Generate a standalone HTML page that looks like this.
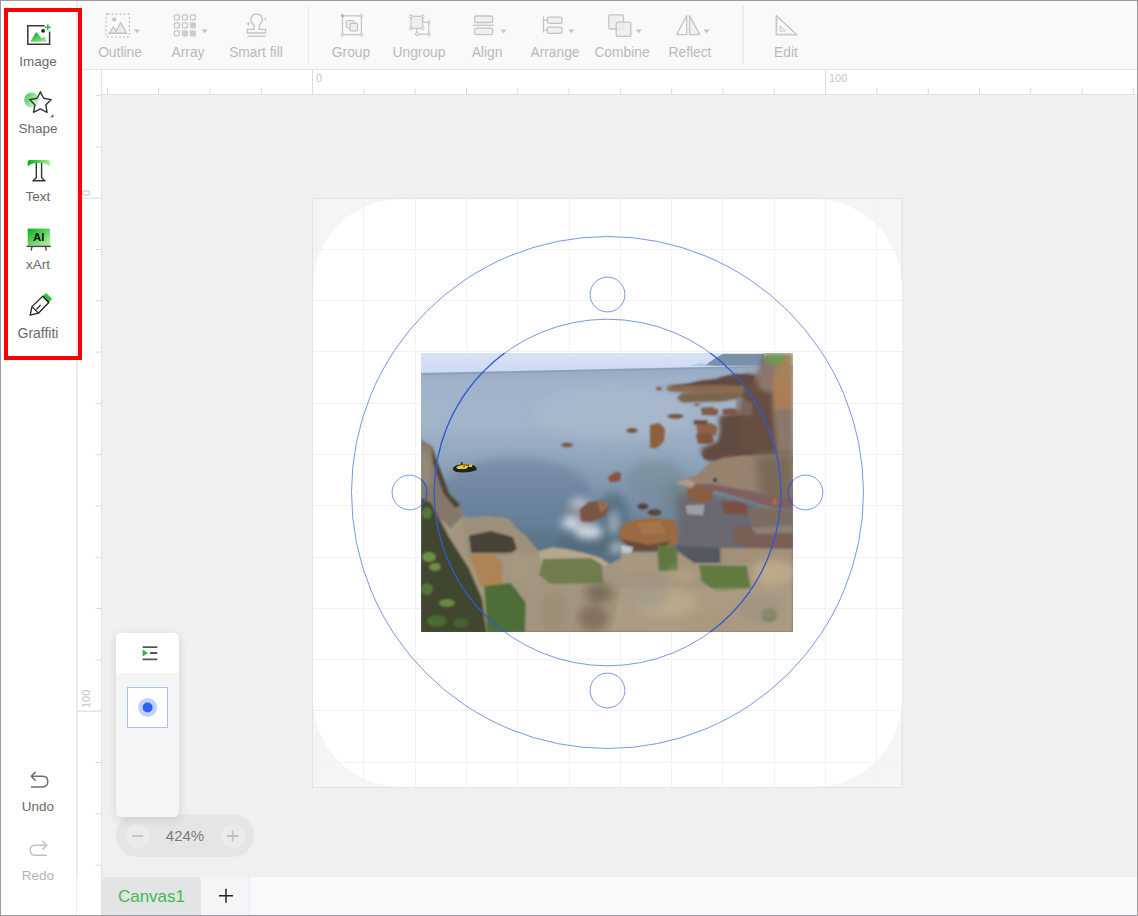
<!DOCTYPE html>
<html><head><meta charset="utf-8">
<style>
*{margin:0;padding:0;box-sizing:border-box}
html,body{width:1138px;height:916px;overflow:hidden;background:#fff;font-family:"Liberation Sans",sans-serif}
.a{position:absolute}
#frame{position:absolute;left:0;top:0;width:1138px;height:916px;border:1px solid #9c9c9c;pointer-events:none;z-index:50}
#side{left:1px;top:1px;width:76px;height:914px;background:#fff}
#tool{left:77px;top:1px;width:1060px;height:69px;background:#f9f9f9;border-bottom:1px solid #e4e4e4}
#canvas{left:102px;top:95px;width:1035px;height:782px;background:#f0f0f0}
.lbl{position:absolute;font-size:13.5px;color:#6a6a6a;text-align:center;width:76px;white-space:nowrap}
.tl{position:absolute;font-size:13.8px;color:#b9b9b9;text-align:center;width:90px;white-space:nowrap}
.sep{position:absolute;top:6px;width:1.5px;height:58px;background:#ececf0}
</style></head><body>
<div id="frame"></div>
<svg class="a" style="left:0;top:0;z-index:30" width="1138" height="916" viewBox="0 0 1138 916">
<defs>
<linearGradient id="gA" x1="0.2" y1="0" x2="1" y2="1"><stop offset="0" stop-color="#00ac18"/><stop offset="1" stop-color="#a8eea0"/></linearGradient>
<linearGradient id="gB" x1="0" y1="0" x2="1" y2="0.6"><stop offset="0" stop-color="#35c84a"/><stop offset="1" stop-color="#d6f5d2"/></linearGradient>
<linearGradient id="gT" x1="0" y1="0" x2="1" y2="0"><stop offset="0" stop-color="#00b012"/><stop offset="1" stop-color="#a8ee9c"/></linearGradient>
<linearGradient id="gX" x1="0" y1="0" x2="1" y2="1"><stop offset="0" stop-color="#00b414"/><stop offset="1" stop-color="#b8f2aa"/></linearGradient>
</defs>
<!-- Image icon -->
<path d="M44.5 25.8 H27.8 V44.2 H49.6 V31.5" fill="none" stroke="#383838" stroke-width="1.5"/>
<path d="M47.8 24.2 V30.2 M44.8 27.2 H50.8" stroke="#26c43c" stroke-width="1.5"/>
<circle cx="43.1" cy="30.8" r="1.9" fill="#222"/>
<path d="M30.3 41.7 L35.8 32.6 Q36.2 32 36.7 32.6 L41.8 38.6 L43.6 37.2 Q44.1 36.8 44.5 37.3 L47 41.7 Z" fill="url(#gA)"/>
<!-- Shape icon -->
<circle cx="31.6" cy="100" r="7.4" fill="url(#gB)"/>
<path d="M40.4 91.8 L43.6 98.3 L51.2 99.6 L45.8 104.9 L47.1 112.3 L40.4 108.9 L33.5 112.3 L35 104.9 L29.6 99.6 L37.2 98.3 Z" fill="none" stroke="#333" stroke-width="1.4" stroke-linejoin="round"/>
<path d="M53.4 114 L53.4 117.2 L50.2 117.2 Z" fill="#555"/>
<!-- Text icon -->
<path d="M27.7 166.6 V161.8 Q27.7 160 29.8 160 H47.8 Q49.9 160 49.9 161.8 V166.6 Q46.5 163 41.6 163 H36.3 Q31.2 163 27.7 166.6 Z" fill="url(#gT)"/>
<path d="M36.3 163 V177.8 L33 180.8 H44.9 L41.6 177.8 V163" fill="none" stroke="#333" stroke-width="1.4" stroke-linejoin="round"/>
<!-- xArt icon -->
<rect x="27.7" y="228.6" width="22.2" height="16.4" fill="url(#gX)"/>
<text x="38.8" y="241.3" font-size="11.5" font-weight="bold" text-anchor="middle" fill="#111" font-family="Liberation Sans">AI</text>
<path d="M26.6 246.3 H50.7" stroke="#444" stroke-width="1.6"/>
<path d="M32 247 L31.2 250 M45.6 247 L46.2 250" stroke="#444" stroke-width="1.3" stroke-linecap="round"/>
<!-- Graffiti icon -->
<path d="M42.6 296.3 L45.4 293.6 Q46 293 46.7 293.6 L51.6 298.2 Q52.2 298.9 51.6 299.6 L48.9 302.6 Z" fill="#2fc43f"/>
<path d="M42.8 296.1 L32 306.6 L30.1 315.1 L38.4 313.2 L48.8 302.5 Z" fill="none" stroke="#222" stroke-width="1.3" stroke-linejoin="round"/>
<path d="M43.2 297 L48.4 302" stroke="#222" stroke-width="1.2"/>
<path d="M32 306.6 L38.4 313.2 M36.3 309.6 L40.6 305" stroke="#222" stroke-width="1.2"/>
<!-- Undo -->
<path d="M31.5 776.3 H42.5 Q47.8 776.3 47.8 781.6 Q47.8 787 42.5 787 H31" fill="none" stroke="#6b6e70" stroke-width="1.5"/>
<path d="M35.2 772.4 L31.3 776.3 L35.2 780.2" fill="none" stroke="#6b6e70" stroke-width="1.5" stroke-linejoin="round" stroke-linecap="round"/>
<!-- Redo -->
<path d="M46.5 845.2 H35.5 Q30.2 845.2 30.2 850.2 Q30.2 855.2 35.5 855.2 H46.8" fill="none" stroke="#c2c2c2" stroke-width="1.5"/>
<path d="M42.8 841.3 L46.7 845.2 L42.8 849.1" fill="none" stroke="#c2c2c2" stroke-width="1.5" stroke-linejoin="round" stroke-linecap="round"/>

<!-- toolbar icons -->
<g fill="none" stroke="#c4c4c4" stroke-width="1.3">
<!-- outline -->
<rect x="106" y="14" width="23.5" height="23.2" rx="1.5" stroke-dasharray="2 2"/>
<path d="M109.2 33.3 L113.4 27 L117 33.3 Z" fill="#ededed"/>
<path d="M115 33.3 L120.6 22.6 L126.6 33.3 Z" fill="#ededed"/>
<path d="M108.5 33.3 H127" />
</g>
<circle cx="114.2" cy="19.4" r="2.1" fill="#c4c4c4"/>
<g fill="#c4c4c4">
<path d="M134 29.6 H140 L137 33.2 Z"/>
<path d="M201.6 29.6 H207.6 L204.6 33.2 Z"/>
<path d="M500.6 29.6 H506.6 L503.6 33.2 Z"/>
<path d="M568.2 29.6 H574.2 L571.2 33.2 Z"/>
<path d="M635.8 29.6 H641.8 L638.8 33.2 Z"/>
<path d="M703.6 29.6 H709.6 L706.6 33.2 Z"/>
</g>
<!-- array -->
<g fill="none" stroke="#c4c4c4" stroke-width="1.3">
<rect x="174.4" y="14.8" width="5" height="5" rx="1.2"/>
<rect x="182.4" y="14.8" width="5" height="5" rx="1.2"/>
<rect x="190.4" y="14.8" width="5" height="5" rx="1.2"/>
<rect x="174.4" y="22.8" width="5" height="5" rx="1.2"/>
<rect x="182.4" y="22.8" width="5" height="5" rx="1.2"/>
<rect x="174.4" y="30.8" width="5" height="5" rx="1.2"/>
</g>
<g fill="#cdcdcd">
<rect x="189.8" y="22.2" width="6.2" height="6.2" rx="1.4"/>
<rect x="181.8" y="30.2" width="6.2" height="6.2" rx="1.4"/>
<rect x="189.8" y="30.2" width="6.2" height="6.2" rx="1.4"/>
</g>
<!-- smart fill -->
<g fill="none" stroke="#c4c4c4" stroke-width="1.3">
<path d="M254 25 Q250.8 22.8 250.8 19.6 A5.8 5.8 0 0 1 262.4 19.6 Q262.4 22.8 259.2 25 V29.4 H265.6 V33 H247.4 V29.4 H254 Z"/>
<path d="M247.4 36.2 H265.6"/>
</g>
<path d="M248.4 21.6 L249 23.2 L250.6 23.8 L249 24.4 L248.4 26 L247.8 24.4 L246.2 23.8 L247.8 23.2 Z" fill="#c4c4c4"/>
<path d="M265.3 17 L265.8 18.4 L267.2 19 L265.8 19.6 L265.3 21 L264.8 19.6 L263.4 19 L264.8 18.4 Z" fill="#c4c4c4"/>
<!-- group -->
<g fill="none" stroke="#c4c4c4" stroke-width="1.2">
<rect x="342.5" y="15.8" width="18.9" height="18.9"/>
<rect x="346.4" y="20.5" width="7.5" height="7.5" rx="1" fill="#efefef"/>
<rect x="350" y="23.4" width="7.5" height="7.5" rx="1" fill="#efefef"/>
</g>
<g fill="#fafafa" stroke="#bdbdbd" stroke-width="1">
<circle cx="342.5" cy="15.8" r="1.4" fill="#aaa"/><circle cx="361.4" cy="15.8" r="1.4"/><circle cx="342.5" cy="34.7" r="1.4"/><circle cx="361.4" cy="34.7" r="1.4"/>
</g>
<!-- ungroup -->
<g fill="none" stroke="#c4c4c4" stroke-width="1.2">
<rect x="416.8" y="22.2" width="12" height="12"/>
<rect x="411" y="16.3" width="11.7" height="12.1" fill="#efefef"/>
</g>
<g fill="#fafafa" stroke="#bdbdbd" stroke-width="1">
<circle cx="411" cy="16.3" r="1.4"/><circle cx="422.7" cy="16.3" r="1.4"/><circle cx="411" cy="28.4" r="1.4"/><circle cx="422.7" cy="28.4" r="1.4"/>
<circle cx="428.8" cy="22.2" r="1.4"/><circle cx="416.8" cy="34.2" r="1.4"/><circle cx="428.8" cy="34.2" r="1.4"/>
</g>
<!-- align -->
<g fill="#f0f0f0" stroke="#c4c4c4" stroke-width="1.3">
<rect x="474.6" y="16" width="18" height="6.5" rx="1.5"/>
<rect x="474.6" y="28.2" width="18" height="6.5" rx="1.5"/>
<path d="M473 25.3 H494" fill="none"/>
</g>
<!-- arrange -->
<g fill="#f0f0f0" stroke="#c4c4c4" stroke-width="1.3">
<path d="M543.5 16.6 V32.6 M543.5 20.2 H547 M543.5 30.2 H547" fill="none"/>
<rect x="547.4" y="17.2" width="14.6" height="6.1" rx="1.4"/>
<rect x="547.4" y="27.2" width="14.6" height="6.1" rx="1.4"/>
</g>
<!-- combine -->
<g fill="#f0f0f0" stroke="#c4c4c4" stroke-width="1.3">
<rect x="608.8" y="14.8" width="14.6" height="14.2" rx="1.4"/>
<rect x="616.2" y="22.1" width="14.6" height="14.2" rx="1.4" fill="#ececec" fill-opacity="0.8"/>
</g>
<!-- reflect -->
<g fill="#f0f0f0" stroke="#c4c4c4" stroke-width="1.3" stroke-linejoin="round">
<path d="M676.6 34.6 L686.7 15.6 V34.6 Z" fill="#fafafa"/>
<path d="M689.5 15.6 L699.8 34.6 H689.5 Z"/>
</g>
<!-- edit -->
<g fill="none" stroke="#c4c4c4" stroke-width="1.3" stroke-linejoin="round">
<path d="M776.2 15.6 V34.8 H796.8 Z"/>
<path d="M780.2 25.8 V31 H785.4 Z" stroke-width="1"/>
<path d="M776.2 20 H778 M776.2 23 H778 M776.2 26 H778 M776.2 29 H778 M779 34.8 V33 M782 34.8 V33 M785 34.8 V33 M788 34.8 V33 M791 34.8 V33" stroke-width="0.9"/>
</g>
</svg>
<!-- sidebar -->
<div id="side" class="a"></div>
<div class="a" style="left:4px;top:8px;width:78px;height:352px;border:4px solid #fb0007;z-index:40"></div>

<div class="lbl" style="left:0;top:54px">Image</div>
<div class="lbl" style="left:0;top:121px">Shape</div>
<div class="lbl" style="left:0;top:189px">Text</div>
<div class="lbl" style="left:0;top:257px">xArt</div>
<div class="lbl" style="left:0;top:325px;font-size:14px">Graffiti</div>
<div class="lbl" style="left:0;top:799px">Undo</div>
<div class="lbl" style="left:0;top:867.5px;color:#b4b4b4">Redo</div>

<!-- toolbar -->
<div id="tool" class="a"></div>
<div class="tl" style="left:75px;top:45px">Outline</div>
<div class="tl" style="left:143px;top:45px">Array</div>
<div class="tl" style="left:211px;top:45px">Smart fill</div>
<div class="sep" style="left:307.5px"></div>
<div class="tl" style="left:306px;top:45px">Group</div>
<div class="tl" style="left:374px;top:45px">Ungroup</div>
<div class="tl" style="left:442px;top:45px">Align</div>
<div class="tl" style="left:510px;top:45px">Arrange</div>
<div class="tl" style="left:577px;top:45px">Combine</div>
<div class="tl" style="left:645px;top:45px">Reflect</div>
<div class="sep" style="left:742px"></div>
<div class="tl" style="left:741px;top:45px">Edit</div>

<!-- rulers -->
<div class="a" style="left:77px;top:70px;width:1060px;height:25px;background:#fff;border-bottom:1px solid #e2e2e2"></div>
<div class="a" style="left:77px;top:70px;width:25px;height:807px;background:#fff;border-right:1px solid #e2e2e2"></div>

<div id="canvas" class="a"></div>
<div class="a" style="left:76px;top:1px;width:2px;height:914px;background:#ececec"></div>
<svg class="a" style="left:0;top:0" width="1138" height="916" viewBox="0 0 1138 916">
<g stroke="#d9d9d9" stroke-width="1">
<line x1="107.4" y1="88" x2="107.4" y2="94" />
<line x1="158.7" y1="88" x2="158.7" y2="94" />
<line x1="210.0" y1="88" x2="210.0" y2="94" />
<line x1="261.3" y1="88" x2="261.3" y2="94" />
<line x1="312.6" y1="70" x2="312.6" y2="94" />
<line x1="363.9" y1="88" x2="363.9" y2="94" />
<line x1="415.2" y1="88" x2="415.2" y2="94" />
<line x1="466.5" y1="88" x2="466.5" y2="94" />
<line x1="517.8" y1="88" x2="517.8" y2="94" />
<line x1="569.1" y1="88" x2="569.1" y2="94" />
<line x1="620.4" y1="88" x2="620.4" y2="94" />
<line x1="671.7" y1="88" x2="671.7" y2="94" />
<line x1="723.0" y1="88" x2="723.0" y2="94" />
<line x1="774.3" y1="88" x2="774.3" y2="94" />
<line x1="825.6" y1="70" x2="825.6" y2="94" />
<line x1="876.9" y1="88" x2="876.9" y2="94" />
<line x1="928.2" y1="88" x2="928.2" y2="94" />
<line x1="979.5" y1="88" x2="979.5" y2="94" />
<line x1="1030.8" y1="88" x2="1030.8" y2="94" />
<line x1="1082.1" y1="88" x2="1082.1" y2="94" />
<line x1="1133.4" y1="88" x2="1133.4" y2="94" />
<line x1="95.5" y1="95.6" x2="101" y2="95.6" />
<line x1="95.5" y1="146.9" x2="101" y2="146.9" />
<line x1="77" y1="198.2" x2="101" y2="198.2" />
<line x1="95.5" y1="249.5" x2="101" y2="249.5" />
<line x1="95.5" y1="300.8" x2="101" y2="300.8" />
<line x1="95.5" y1="352.1" x2="101" y2="352.1" />
<line x1="95.5" y1="403.4" x2="101" y2="403.4" />
<line x1="95.5" y1="454.7" x2="101" y2="454.7" />
<line x1="95.5" y1="506.0" x2="101" y2="506.0" />
<line x1="95.5" y1="557.3" x2="101" y2="557.3" />
<line x1="95.5" y1="608.6" x2="101" y2="608.6" />
<line x1="95.5" y1="659.9" x2="101" y2="659.9" />
<line x1="77" y1="711.2" x2="101" y2="711.2" />
<line x1="95.5" y1="762.5" x2="101" y2="762.5" />
<line x1="95.5" y1="813.8" x2="101" y2="813.8" />
<line x1="95.5" y1="865.1" x2="101" y2="865.1" />
</g>
<text x="316" y="82" font-size="11" fill="#c6c6c6" font-family="Liberation Sans">0</text>
<text x="829" y="82" font-size="11" fill="#c6c6c6" font-family="Liberation Sans">100</text>
<text transform="translate(89.5,196) rotate(-90)" font-size="11" fill="#c6c6c6" font-family="Liberation Sans">0</text>
<text transform="translate(89.5,708) rotate(-90)" font-size="11" fill="#c6c6c6" font-family="Liberation Sans">100</text>
<!-- artboard -->
<rect x="312.5" y="198.5" width="589.5" height="589" fill="#f5f5f5" stroke="#e3e3e3" stroke-width="1"/>
<rect x="313" y="199" width="589" height="588" rx="88" ry="88" fill="#fff"/>
<g stroke="#f2f2f2" stroke-width="1">
<line x1="363.5" y1="198" x2="363.5" y2="787" />
<line x1="313" y1="249.5" x2="902" y2="249.5" />
<line x1="415.5" y1="198" x2="415.5" y2="787" />
<line x1="313" y1="300.5" x2="902" y2="300.5" />
<line x1="466.5" y1="198" x2="466.5" y2="787" />
<line x1="313" y1="351.5" x2="902" y2="351.5" />
<line x1="517.5" y1="198" x2="517.5" y2="787" />
<line x1="313" y1="403.5" x2="902" y2="403.5" />
<line x1="569.5" y1="198" x2="569.5" y2="787" />
<line x1="313" y1="454.5" x2="902" y2="454.5" />
<line x1="620.5" y1="198" x2="620.5" y2="787" />
<line x1="313" y1="505.5" x2="902" y2="505.5" />
<line x1="671.5" y1="198" x2="671.5" y2="787" />
<line x1="313" y1="557.5" x2="902" y2="557.5" />
<line x1="722.5" y1="198" x2="722.5" y2="787" />
<line x1="313" y1="608.5" x2="902" y2="608.5" />
<line x1="774.5" y1="198" x2="774.5" y2="787" />
<line x1="313" y1="659.5" x2="902" y2="659.5" />
<line x1="825.5" y1="198" x2="825.5" y2="787" />
<line x1="313" y1="710.5" x2="902" y2="710.5" />
<line x1="876.5" y1="198" x2="876.5" y2="787" />
<line x1="313" y1="762.5" x2="902" y2="762.5" />
</g>
<!-- photo -->
<g id="photo">
<defs>
<linearGradient id="sky" x1="0" y1="0" x2="0" y2="1"><stop offset="0" stop-color="#d6e2f7"/><stop offset="1" stop-color="#ccdaf2"/></linearGradient>
<linearGradient id="sea" x1="0" y1="0" x2="0" y2="1">
<stop offset="0.05" stop-color="#94a8c2"/><stop offset="0.1" stop-color="#a0b3cb"/><stop offset="0.25" stop-color="#a2b4c9"/><stop offset="0.4" stop-color="#8ea3ba"/><stop offset="0.52" stop-color="#7a92a9"/><stop offset="0.64" stop-color="#67819a"/><stop offset="0.75" stop-color="#566e84"/></linearGradient>
<filter id="bl" x="-20%" y="-20%" width="140%" height="140%"><feGaussianBlur stdDeviation="1.1"/></filter>
<filter id="bl15" x="-30%" y="-30%" width="160%" height="160%"><feGaussianBlur stdDeviation="2"/></filter>
<filter id="bl2" x="-50%" y="-50%" width="200%" height="200%"><feGaussianBlur stdDeviation="4"/></filter>
<clipPath id="pc"><rect x="0" y="0" width="372" height="279"/></clipPath>
</defs>
<g transform="translate(421,353)" clip-path="url(#pc)">
<rect x="0" y="0" width="372" height="279" fill="url(#sea)"/>
<!-- sea tonal variation -->
<g filter="url(#bl2)">
<ellipse cx="190" cy="60" rx="80" ry="28" fill="#abbbce" opacity="0.5"/>
<ellipse cx="95" cy="140" rx="75" ry="35" fill="#5f7890" opacity="0.45"/>
<ellipse cx="235" cy="125" rx="30" ry="18" fill="#6f8890" opacity="0.5"/>
<ellipse cx="262" cy="145" rx="22" ry="16" fill="#6e8282" opacity="0.6"/>
<ellipse cx="170" cy="190" rx="35" ry="12" fill="#4a6472" opacity="0.6"/>
<ellipse cx="192" cy="165" rx="16" ry="26" fill="#4d6878" opacity="0.7"/>
<ellipse cx="120" cy="185" rx="40" ry="10" fill="#56707f" opacity="0.5"/>
<ellipse cx="193" cy="170" rx="4" ry="12" fill="#d8e2ea" opacity="0.6"/>
<ellipse cx="196" cy="195" rx="6" ry="4" fill="#dfe7ee" opacity="0.8"/>
</g>
<!-- sky & hill -->
<path d="M0 0 H372 V12.4 L0 20 Z" fill="url(#sky)"/>
<path d="M0 20 L343 12.6 L343 14.2 L0 22.3 Z" fill="#7f8fa2" opacity="0.4"/>
<path d="M283 12.8 L296 4 L302 1 L343.4 1 V12.8 Z" fill="#7a90a6"/>
<path d="M268 13 L280 9.5 L292 12.8 Z" fill="#b4c4d8" opacity="0.8"/>
<!-- right cliff & mass -->
<g filter="url(#bl15)">
<path fill="#7a6252" d="M343.4 0 L336.2 20.4 L325 21.8 L316.3 21.8 L301 25 L294.5 27.3 L281.4 28.4 L268.3 31.7 L248.7 32.8 L244.3 35 L248.7 37.1 L272.7 38.2 L294.5 39.3 L261.8 40.4 L257.4 44.8 L261.8 48 L301 47 L316.3 43.7 L324 48 L331 62 L298 66 L299 78 L296.6 88.8 L279.8 96 L283.4 104.4 L293 110 L321 102.4 L372 100 V0 Z"/>
<path d="M297.8 63.6 L331 55 L372 60 V110 L293 110 L283.4 104.4 L279.8 96 L296.6 88.8 L299 78 Z" fill="#5e4b40"/>
<path d="M324 30 L352 28 L353.5 100 L320 98 L318 60 Z" fill="#665042"/>
<path d="M336 20 L343.4 8 H357.8 L352 40 L338 36 Z" fill="#8c746c"/>
<path d="M357.8 0 H372 V58 L352 58 L351.8 27.6 Z" fill="#a5835c"/>
<path d="M352 56 H372 V102 L356 102 Z" fill="#8a7868"/>
<path d="M351.8 27.6 H372 V56 L352 56 Z" fill="#ab7e58"/>
<path d="M343.4 0 H364 L362.6 10 L347 12 Z" fill="#6c9a52"/>
<path d="M317 21 L322 20.5 L323 27 L318 27 Z" fill="#c4c0b8"/>
</g>
<g filter="url(#bl)">
<path d="M246 34 L268.3 30.5 L281.4 27.4 L294.5 26.3 L301 24 L316.3 20.8 L325 20.8 L334 23 L330 33 L300 34 L260 34.5 Z" fill="#5e4c42"/>
<path d="M244.3 35.5 L262 33 L300 32 L322 33 L322 40.4 L294.5 40 L272.7 39 L250 38 Z" fill="#8a6a4e"/>
<path d="M256.4 45 L261.8 40.4 L294.5 40.4 L320 40.5 L318 45 L301 48 L261.8 49 Z" fill="#7a6650"/>
</g>
<!-- scattered rocks top -->
<g filter="url(#bl)">
<ellipse cx="146" cy="92" rx="6" ry="2.2" fill="#7e5446"/>
<ellipse cx="211" cy="77.5" rx="5.5" ry="2.6" fill="#7a5040"/>
<ellipse cx="238" cy="35.5" rx="3" ry="1.8" fill="#7e5a48"/>
<ellipse cx="254.5" cy="63.3" rx="8" ry="2.4" fill="#7a5244"/>
<ellipse cx="276" cy="51.6" rx="2.8" ry="1.2" fill="#7a5244"/>
<path d="M279.8 55 L290 54 L297.8 57 L296 62.4 L281 62 Z" fill="#835a44"/>
<path d="M301.4 56 L312 55.2 L318.2 58 L317 62.4 L302 62 Z" fill="#7b5646"/>
<path d="M272.6 67.2 L287 67.5 L286 72 L273 71.5 Z" fill="#6e4438"/>
<path d="M275 72 L290 70 L296.6 74 L295 82.8 L277 81.5 Z" fill="#8c6242"/>
<path d="M275 81 L290 80.4 L293 86 L291 91.2 L277 90.5 Z" fill="#7d5540"/>
<path d="M314.6 43.2 L331.4 50 L331 62.4 L314.6 62 Z" fill="#85706a" opacity="0.6"/>
<path d="M229 72 L238 70 L244 76 L243 88 L236 95 L229 95 Z" fill="#8c5e3c"/>
<path d="M187 124 L195 118.5 L200 120 L199.5 128 L189 129.5 Z" fill="#8a5243"/>
<path d="M280.2 100 L316.3 100 L314 106 L284 106.5 Z" fill="#6a4a42"/>
</g>
<path d="M256 140 L300 142 L340 152 L330 212 L256 212 Z" fill="#6a6870" filter="url(#bl2)"/>
<!-- slab -->
<g filter="url(#bl)">
<path d="M256.2 128.8 L276.6 121.6 L288.6 109.6 L301.9 104.8 L321 102.4 L372 100 V156.5 L351 154 L321 145.6 L297 138.4 L270.6 134.8 L256.2 130.5 Z" fill="#97826e"/>
<path d="M335 102 L372 100 V156 L340 152 Z" fill="#7a6a58" filter="url(#bl2)"/>
<path d="M262 131 L290 131 L330 138 L352 144 L372 146 V157 L351 154 L321 145.6 L297 138.4 L270.6 134.8 Z" fill="#7e6060"/>
<path d="M256.2 128.8 L266 126 L275 130 L270.6 134.8 L256.2 130.5 Z" fill="#b09a8a"/>
<circle cx="294" cy="127" r="2" fill="#2a2422"/>
<path d="M265.8 136 L278 133.6 L292.2 138 L291 149.2 L272 149 L266 143 Z" fill="#8a5f40"/>
<path d="M300.7 149 L315 148 L327 152 L326 161.3 L304 161 Z" fill="#7b5040"/>
<path d="M325.9 156 L350 155.3 L372 158 V172 L332 172 Z" fill="#7b6c60"/>
<path d="M311.5 174 L340 172 L372 174 V196 L330 196 L314 188 Z" fill="#7a5e55"/>
<path d="M330 174 L372 173 V180 L335 181 Z" fill="#8d7e72"/>
<path d="M352 146.5 L355.5 146.5 L355.5 151 L352 151 Z" fill="#d8602a"/>
<path d="M249 166 L256 170 L256.5 190 L249 192 Z" fill="#9a6a42"/>
</g>
<!-- foam rock & big rock -->
<g filter="url(#bl2)">
<ellipse cx="157" cy="162" rx="12" ry="14" fill="#8a8288" opacity="0.7"/>
<ellipse cx="150" cy="170" rx="9" ry="6" fill="#e0e8ee" opacity="0.9"/>
<ellipse cx="168" cy="179" rx="14" ry="7" fill="#dde5ec" opacity="0.9"/>
<ellipse cx="158" cy="150" rx="9" ry="5" fill="#d0dae2" opacity="0.8"/>
</g>
<g filter="url(#bl)">
<path d="M159 156 L168 149 L182 148 L188.6 152 L184 163 L170 169 L160 168 Z" fill="#7a5545"/>
<path d="M176 149 L186 149 L188 153 L180 160 Z" fill="#9a6a50"/>
<ellipse cx="222" cy="153.5" rx="5.5" ry="3" fill="#5a4035"/>
<ellipse cx="233.5" cy="159.5" rx="7" ry="3.2" fill="#5e4438"/>
<path d="M198 176 L208 168 L228 164.8 L250 166 L256 176 L255 190 L240 197.5 L215 197 L200 188 Z" fill="#9a6a42"/>
<path d="M215 170 L238 168 L245 180 L222 182 Z" fill="#a8784a" opacity="0.8"/>
<path d="M200 186 L228 192 L250 188 L240 197.5 L212 198 Z" fill="#6a4a35"/>
<path d="M200 192 L212 194 L210 204 L201 202 Z" fill="#d2dbe0" opacity="0.8"/>
<path d="M264.6 152 L283.8 151.6 L282 162.5 L266 161 Z" fill="#c0c8cc" opacity="0.6"/>
</g>
<!-- jet ski -->
<path d="M31.7 116 Q33 112 39 111.5 L52 112 Q56 113.5 55.7 117 Q50 119.8 38 119.3 Q32.5 119 31.7 116 Z" fill="#1e2226"/>
<path d="M35 114.5 Q37.5 111.5 43 112 L48 113 L45 116 L37 116 Z" fill="#e2d21a"/>
<rect x="48" y="111.5" width="3.2" height="2.5" fill="#d8d020"/>
<rect x="42" y="111" width="2" height="3.5" fill="#d06020"/>
<rect x="40" y="109" width="1.6" height="3" fill="#333"/>
<!-- left + bottom land -->
<g filter="url(#bl)">
<path fill="#a3957f" d="M0 86.6 L10.9 93.1 L15.3 106.2 L20.7 120.4 L28.4 141.1 L39.3 152 L41.5 163 L48 165.2 L65.5 163 L87.3 165.2 L96 176 L104.8 182.6 L113.5 193.5 L118 198 L131 194.6 L144 195.7 L163.8 200 L179 204.5 L188.6 211 L202 203.8 L213 199.6 L234 199.6 L249 193.7 L273 210 L299.5 210 L299.5 195 L372 196 V279 H0 Z"/>
<path d="M0 86.6 L10.9 93.1 L15.3 106.2 L20.7 120.4 L28.4 141.1 L39.3 152 L41.5 163 L30 175 L0 150 Z" fill="#85786a"/>
<path d="M0 95 L8 100 L10 130 L0 135 Z" fill="#9a9080" filter="url(#bl2)"/>
<path d="M10.9 93.1 L15.3 106.2 L20.7 120.4 L28.4 141.1 L39.3 152 L34 155 L22 140 L12 110 Z" fill="#4e4438"/>
<path d="M41.5 163 L48 165.2 L65.5 163 L87.3 165.2 L96 176 L104.8 182.6 L113.5 193.5 L116 202 L45 204 Z" fill="#9d917c"/>
<path d="M48 182.6 L70 178 L91.7 184 L96 196 L90 200 L50 200 Z" fill="#4a4238"/>
<path d="M48 202 L72 200 L82 212 L80.8 233 L60 233 Z" fill="#ad8454"/>
<path d="M0 145 L10 150 L28.4 184.8 L48 215.4 L61.1 246 L65.5 280 L0 280 Z" fill="#40462e"/>
<path d="M118 198 L131 194.6 L144 195.7 L163.8 200 L179 204.5 L188.6 211 L180 214 L120 212 Z" fill="#b6a98b"/>
<path d="M122 206 L170 205 L181 212 L182 230 L130 231 L118 222 Z" fill="#6f7d4f"/>
<path d="M200 200 L234 199.6 L236 220 L200 220 Z" fill="#a89880"/>
<path d="M236 192 L256 194 L257 218 L238 218 Z" fill="#607840"/>
<path d="M253 193 L299.5 195 L299.5 210 L273 210 Z" fill="#55585f"/>
<path d="M299.5 195 L372 196 V210 L299.5 210 Z" fill="#a29078"/>
<path d="M278 212 L326 213 L330 236 L296 239 L280 228 Z" fill="#62793f"/>
<path d="M63.3 233 L90 230 L104.8 250 L104 279 L66 279 Z" fill="#4d6e38"/>

<path d="M200 235 L372 235 V279 L190 279 Z" fill="#b0a186" opacity="0.6"/>
</g>
<g filter="url(#bl)">
<ellipse cx="6" cy="160" rx="5" ry="6" fill="#5f8a40" opacity="0.7"/>
<ellipse cx="8" cy="204" rx="7" ry="5" fill="#7fa84c" opacity="0.75"/>
<ellipse cx="14" cy="214" rx="6" ry="4" fill="#86ad50" opacity="0.7"/>
<ellipse cx="6" cy="236" rx="6" ry="6" fill="#5e8a3e" opacity="0.7"/>
<ellipse cx="26" cy="250" rx="8" ry="4" fill="#7ea54a" opacity="0.7"/>
<ellipse cx="16" cy="268" rx="10" ry="6" fill="#4f7a38" opacity="0.7"/>
<ellipse cx="40" cy="270" rx="8" ry="5" fill="#4a7236" opacity="0.6"/>
<ellipse cx="348" cy="262" rx="8" ry="7" fill="#6e8450"/>
</g>
<g filter="url(#bl2)">
<ellipse cx="245" cy="250" rx="30" ry="14" fill="#bdab8c" opacity="0.8"/>
<ellipse cx="352" cy="220" rx="22" ry="14" fill="#c2ae8c" opacity="0.8"/>
<ellipse cx="262" cy="222" rx="16" ry="8" fill="#b5a382" opacity="0.7"/>
<ellipse cx="228" cy="242" rx="20" ry="14" fill="#9f988a" opacity="0.6"/>
<ellipse cx="178" cy="240" rx="14" ry="10" fill="#6a6050" opacity="0.7"/>
<ellipse cx="340" cy="256" rx="22" ry="14" fill="#9a9080" opacity="0.6"/>
<ellipse cx="172" cy="265" rx="15" ry="13" fill="#6e5c48" opacity="0.6"/>
<ellipse cx="133" cy="258" rx="14" ry="20" fill="#9a8a70" opacity="0.6"/>
<ellipse cx="100" cy="215" rx="16" ry="14" fill="#a89a80" opacity="0.6"/>
<ellipse cx="290" cy="270" rx="25" ry="9" fill="#a8967a" opacity="0.6"/>
</g>
</g>

</g>
<g fill="none" stroke="#3f6fdc" stroke-width="0.9" opacity="0.8">
<circle cx="607.5" cy="492.5" r="256"/>
<circle cx="607.5" cy="492.5" r="173.3"/>
<circle cx="607.5" cy="294.5" r="17.4"/>
<circle cx="607.5" cy="690.5" r="17.4"/>
<circle cx="409.5" cy="492.5" r="17.4"/>
<circle cx="805.5" cy="492.5" r="17.4"/>
</g>
<clipPath id="photoclip"><rect x="421" y="353" width="372" height="279"/></clipPath>
<g clip-path="url(#photoclip)" fill="none" stroke="#2f58d0" stroke-width="1.3" opacity="0.9">
<circle cx="607.5" cy="492.5" r="173.3"/>
<circle cx="409.5" cy="492.5" r="17.4"/>
<circle cx="805.5" cy="492.5" r="17.4"/>
</g>

</svg>

<!-- tab bar -->
<div class="a" style="left:77px;top:877px;width:1060px;height:38px;background:#f9f9fb"></div>
<div class="a" style="left:77px;top:877px;width:25px;height:38px;background:#fff;border-right:1px solid #e2e2e2"></div>
<div class="a" style="left:102px;top:877px;width:99px;height:38px;background:#e3e4e6;border-radius:4px 4px 0 0"></div>
<div class="a" style="left:102px;top:886.5px;width:99px;text-align:center;font-size:17px;color:#3dba4e">Canvas1</div>
<div class="a" style="left:201px;top:877px;width:49px;height:38px;background:#f5f5f8;border-right:1px solid #ececf0"></div>


<!-- layers panel -->
<div class="a" style="left:116px;top:633px;width:63px;height:183.5px;border-radius:5px;background:#f5f5f5;box-shadow:0 2px 10px rgba(0,0,0,0.12);overflow:hidden;z-index:25">
<div style="position:absolute;left:0;top:0;width:63px;height:40px;background:#fff"></div>
<svg style="position:absolute;left:0;top:0" width="63" height="183">
<path d="M26.6 14.1 H41.3 M34 20 H41.3 M26.6 26.3 H41.3" stroke="#555" stroke-width="1.8"/>
<path d="M26.6 16.5 L32 20 L26.6 23.5 Z" fill="#2fb64a"/>
<rect x="11.5" y="54.5" width="40" height="40" fill="#fff" stroke="#a9c1f5" stroke-width="1"/>
<circle cx="31.6" cy="74.5" r="9.5" fill="#c3d2fb"/>
<circle cx="31.6" cy="74.5" r="5" fill="#2a63f3"/>
</svg>
</div>
<!-- zoom control -->
<div class="a" style="left:116px;top:814px;width:138px;height:43px;border-radius:22px;background:#e5e5e5;z-index:20"></div>
<div class="a" style="left:125.5px;top:824px;width:24px;height:24px;border-radius:12px;background:#ebebeb;z-index:21"></div>
<div class="a" style="left:220.5px;top:824px;width:24px;height:24px;border-radius:12px;background:#ebebeb;z-index:21"></div>
<svg class="a" style="left:0;top:0;z-index:22" width="300" height="916">
<path d="M132.3 836 H143.2" stroke="#c2c2c2" stroke-width="1.8"/>
<path d="M227 836 H238.4 M232.7 830.3 V841.7" stroke="#c2c2c2" stroke-width="1.8"/>
<path d="M219 895.8 H233 M226 888.8 V902.8" stroke="#222" stroke-width="1.5"/>
</svg>
<div class="a" style="left:150px;top:827px;width:70px;text-align:center;font-size:15px;color:#7a7a7a;z-index:22">424%</div>
</body></html>
